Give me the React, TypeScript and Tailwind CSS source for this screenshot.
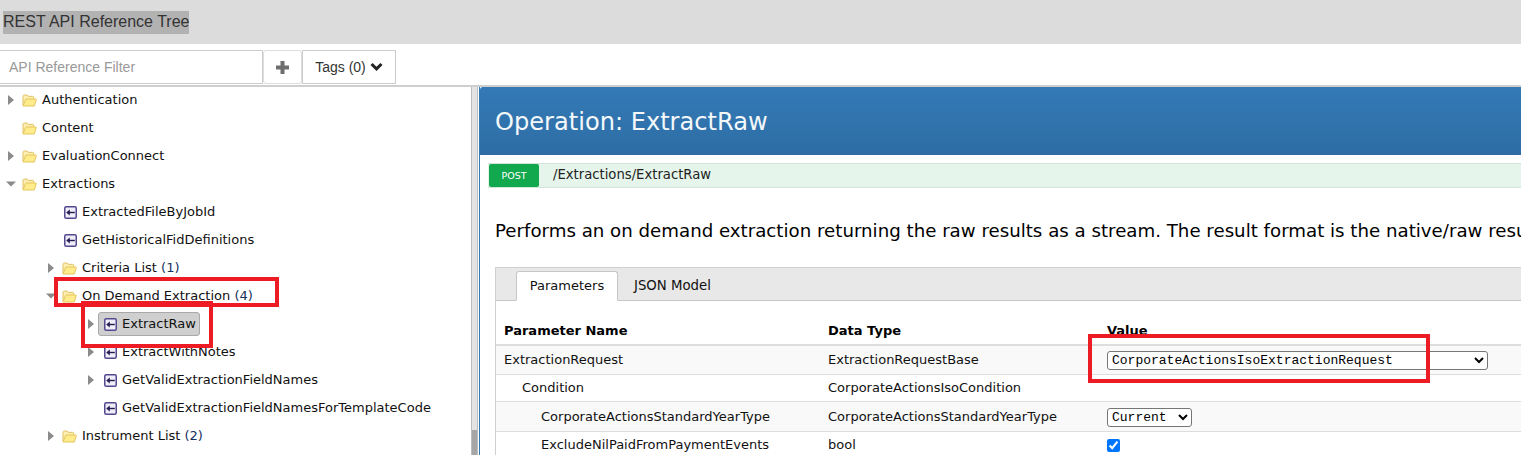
const Caret = ({ open }: { open?: boolean }) => (
  <svg width="10" height="10" viewBox="0 0 10 10" className="shrink-0">
    {open ? <path d="M0 2.5h10L5 7.5z" fill="#8a8a8a" /> : <path d="M2 0v10l6-5z" fill="#8a8a8a" />}
  </svg>
);

const Folder = () => (
  <svg width="15" height="13" viewBox="0 0 15 13" className="shrink-0">
    <path d="M1 11.500V2.500q0-1.500 1.500-1.500h2.500l1.200 1.300h4.300q1.200 0 1.200 1.200V5" fill="#fbeeb0" stroke="#e0c060" strokeWidth="1" />
    <path d="M1 12L3.600 5.500q.3-.5 1-.5h9q1 0 .7.8L12.300 12z" fill="#fdeb8c" stroke="#e6c65e" strokeWidth="1" strokeLinejoin="round" />
  </svg>
);

const Method = () => (
  <svg width="13" height="13" viewBox="0 0 13 13" className="shrink-0">
    <rect x="0.75" y="0.75" width="11.500" height="11.500" rx="1.500" fill="#efedf6" stroke="#55488f" strokeWidth="1.500" />
    <path d="M2.200 6.500L5.800 3.400v6.200z" fill="#241b52" />
    <path d="M5 6.500h5.800" stroke="#241b52" strokeWidth="1.400" />
  </svg>
);

type TreeRow = { label: string; depth: number; kind: "folder" | "method"; caret?: "open" | "closed"; count?: string; selected?: boolean };

const treeRows: TreeRow[] = [
  { label: "Authentication", depth: 0, kind: "folder", caret: "closed" },
  { label: "Content", depth: 0, kind: "folder" },
  { label: "EvaluationConnect", depth: 0, kind: "folder", caret: "closed" },
  { label: "Extractions", depth: 0, kind: "folder", caret: "open" },
  { label: "ExtractedFileByJobId", depth: 1, kind: "method" },
  { label: "GetHistoricalFidDefinitions", depth: 1, kind: "method" },
  { label: "Criteria List", depth: 1, kind: "folder", caret: "closed", count: "(1)" },
  { label: "On Demand Extraction", depth: 1, kind: "folder", caret: "open", count: "(4)" },
  { label: "ExtractRaw", depth: 2, kind: "method", caret: "closed", selected: true },
  { label: "ExtractWithNotes", depth: 2, kind: "method", caret: "closed" },
  { label: "GetValidExtractionFieldNames", depth: 2, kind: "method", caret: "closed" },
  { label: "GetValidExtractionFieldNamesForTemplateCode", depth: 2, kind: "method" },
  { label: "Instrument List", depth: 1, kind: "folder", caret: "closed", count: "(2)" },
];

const Tree = () => (
  <div className="flex-1 min-w-0 -mt-[1px] overflow-hidden text-[13px] text-[#111] font-['DejaVu_Sans',sans-serif]">
    {treeRows.map((row) => (
      <div
        key={row.label}
        className={`flex items-center h-[28px] whitespace-nowrap ${
          row.depth === 0 ? "pl-[6px]" : row.depth === 1 ? "pl-[46px]" : "pl-[86px]"
        }`}
      >
        <span className={`${row.kind === "method" ? "w-[18px]" : "w-[16px]"} shrink-0 flex`}>
          {row.caret && <Caret open={row.caret === "open"} />}
        </span>
        <span
          className={`flex items-center gap-[5px] ${
            row.selected ? "h-[24px] -ml-[6px] pl-[5px] pr-[3px] bg-[#cfcfcf] border border-[#a9a9a9] rounded-[3px]" : ""
          }`}
        >
          {row.kind === "folder" ? <Folder /> : <Method />}
          <span>
            {row.label}
            {row.count && <span className="text-[#14305c]"> {row.count}</span>}
          </span>
        </span>
      </div>
    ))}
  </div>
);

type ParamRow = { name: string; indent: string; type: string; value?: "request" | "year" | "check"; shaded?: boolean; height: string };

const paramRows: ParamRow[] = [
  { name: "ExtractionRequest", indent: "pl-[8px]", type: "ExtractionRequestBase", value: "request", shaded: true, height: "h-[29px]" },
  { name: "Condition", indent: "pl-[26px]", type: "CorporateActionsIsoCondition", height: "h-[27px]" },
  { name: "CorporateActionsStandardYearType", indent: "pl-[45px]", type: "CorporateActionsStandardYearType", value: "year", shaded: true, height: "h-[30px]" },
  { name: "ExcludeNilPaidFromPaymentEvents", indent: "pl-[45px]", type: "bool", value: "check", height: "h-[27px]" },
];

const ValueCell = ({ value }: { value?: ParamRow["value"] }) => {
  if (value === "request") {
    return (
      <select
        defaultValue="CorporateActionsIsoExtractionRequest"
        className="w-[381px] h-[19px] bg-white border border-[#767676] rounded-[3px] text-[13px] text-black font-['Liberation_Mono',monospace]"
      >
        <option>CorporateActionsIsoExtractionRequest</option>
      </select>
    );
  }
  if (value === "year") {
    return (
      <select
        defaultValue="Current"
        className="w-[85px] h-[19px] bg-white border border-[#767676] rounded-[3px] text-[13px] text-black font-['Liberation_Mono',monospace]"
      >
        <option>Current</option>
      </select>
    );
  }
  if (value === "check") {
    return <input type="checkbox" defaultChecked className="block w-[13px] h-[13px] accent-[#0075ff]" />;
  }
  return null;
};

const Panel = () => (
  <div className="flex-1 min-w-0 ml-[1px] overflow-hidden border-l border-[#337ab7] font-['DejaVu_Sans',sans-serif] text-[#111]">
    <div className="h-[68px] flex items-center pl-[15px] pt-[3px] rounded-tl-[3px] text-[24.1px] text-[#f4f8fb] bg-gradient-to-b from-[#337ab7] to-[#2e6da4]">
      Operation: ExtractRaw
    </div>
    <div className="mt-[8px] ml-[8px] h-[25px] flex items-center bg-[#e6f5eb] border-y border-[#cfe6d9] text-[13.2px] text-[#222]">
      <span className="w-[50px] h-[23px] ml-[1px] pt-[2px] flex items-center justify-center bg-[#12a84e] rounded-[2px] text-[9.5px] text-white">
        POST
      </span>
      <span className="ml-[14px] -mt-[1px]">/Extractions/ExtractRaw</span>
    </div>
    <p className="mt-[31px] ml-[15px] text-[18.2px] text-black leading-[24px] whitespace-nowrap">
      Performs an on demand extraction returning the raw results as a stream. The result format is the native/raw result format.
    </p>
    <div className="mt-[24px] ml-[15px] w-[1100px] border-l border-t border-[#cfcfcf]">
      <div className="h-[33px] flex items-end pl-[20px] gap-[16px] bg-[#e8e8e8] border-b border-[#c6c6c6] text-[13px]">
        <span className="w-[102px] h-[30px] -mb-[1px] flex items-center justify-center bg-white border border-[#c6c6c6] border-b-white rounded-t-[3px]">
          Parameters
        </span>
        <span className="h-[30px] pt-[2px] flex items-center text-[13.3px]">JSON Model</span>
      </div>
      <div className="mt-[17px] h-[26px] grid grid-cols-[324px_279px_1fr] items-center pl-[8px] text-[13px] font-bold text-black">
        <span>Parameter Name</span>
        <span>Data Type</span>
        <span>Value</span>
      </div>
      <div className="border-t-2 border-[#ddd]">
        {paramRows.map((row) => (
          <div
            key={row.name}
            className={`grid grid-cols-[323px_279px_1fr] items-center border-b border-[#ddd] text-[13px] ${row.height} ${
              row.shaded ? "bg-[#f9f9f9]" : "bg-white"
            }`}
          >
            <span className={`${row.indent} whitespace-nowrap`}>{row.name}</span>
            <span className="pl-[9px]">{row.type}</span>
            <div className="pl-[9px]">
              <ValueCell value={row.value} />
            </div>
          </div>
        ))}
      </div>
    </div>
  </div>
);

export default function App() {
  return (
    <div className="relative w-[1521px] h-[455px] overflow-hidden bg-white font-['Liberation_Sans',sans-serif]">
      <div className="h-[44px] flex items-center bg-[#dcdcdc] pl-[3px]">
        <span className="h-[23px] flex items-center bg-[#b2b2b2] text-[16px] text-[#333]">REST API Reference Tree</span>
      </div>
      <div className="h-[41px] pt-[6px] flex items-start text-[14px]">
        <div className="w-[263px] h-[34px] flex items-center pl-[9px] bg-white border border-l-0 border-[#ccc] text-[#999]">
          API Reference Filter
        </div>
        <div className="w-[39px] h-[34px] flex items-center justify-center border border-[#ddd] rounded-[3px]">
          <svg width="13" height="13" viewBox="0 0 13 13">
            <path d="M4.500 0h4v4.500H13v4H8.500V13h-4V8.500H0v-4h4.500z" fill="#6e6e6e" />
          </svg>
        </div>
        <div className="w-[94px] h-[34px] flex items-center justify-center gap-[4px] border border-[#ccc] text-[#333]">
          Tags (0)
          <svg width="13" height="10" viewBox="0 0 13 10">
            <path d="M0.500 3L2.600 1 6.500 4.800 10.400 1 12.500 3 6.500 9z" fill="#222" />
          </svg>
        </div>
      </div>
      <div className="h-[370px] flex border-t-2 border-[#cfcfcf]">
        <div className="w-[471px] shrink-0 flex overflow-hidden">
          <Tree />
        </div>
        <div className="w-[7px] shrink-0 flex flex-col border-x border-[#bdbdbd] bg-[#e4e4e4]">
          <div className="h-[343px]" />
          <div className="flex-1 bg-[#a6a6a6]" />
        </div>
        <Panel />
      </div>
      <div className="absolute left-[54px] top-[277px] w-[225px] h-[30px] border-4 border-[#ed1c24]" />
      <div className="absolute left-[81px] top-[301px] w-[132px] h-[47px] border-4 border-[#ed1c24]" />
      <div className="absolute left-[1088px] top-[334px] w-[342px] h-[49px] border-4 border-[#ed1c24]" />
    </div>
  );
}
